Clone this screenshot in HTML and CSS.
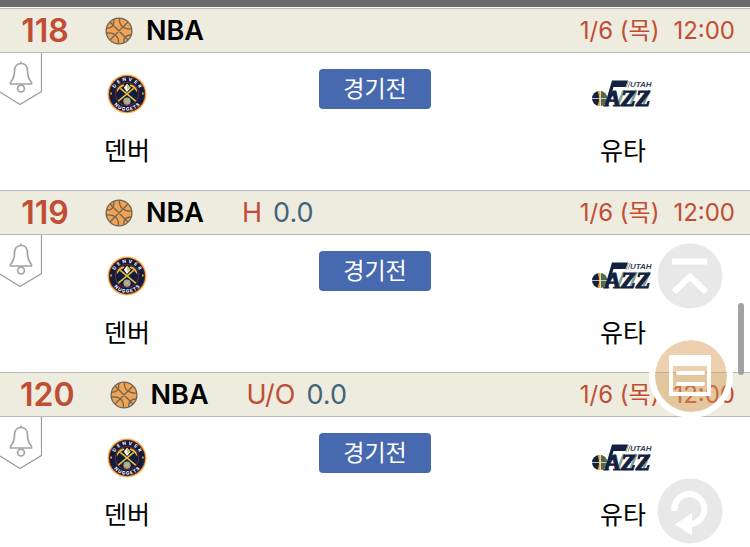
FILE: index.html
```html
<!DOCTYPE html>
<html lang="ko">
<head>
<meta charset="utf-8">
<meta name="viewport" content="width=device-width, initial-scale=1">
<title>NBA 경기 목록</title>
<link rel="stylesheet" href="styles.css">
</head>
<body>
<svg class="defs" aria-hidden="true">
  <symbol id="ball" viewBox="0 0 28 28">
    <circle cx="14" cy="14" r="12.9" fill="#f1a253" stroke="#6c6656" stroke-width="1.3"/>
    <path d="M5 5 23 23M23 5 5 23M14.500 1.500C14 8 18 12.500 26.500 12M1.500 16C9 15 14 19 13.500 26.500M19 26C18 21 21 18 26 18M2 11C6 11.500 9 9 9 3" fill="none" stroke="#6c6656" stroke-width="1.300"/>
  </symbol>
  <symbol id="bell" viewBox="0 0 42 52">
    <path d="M41.500 0V38.500L20 51.500 0 39" fill="#fff" stroke="#999" stroke-width="1.200"/>
    <path d="M21 8.500v2M21 10.500c-4 0-6.500 3-6.500 7.500 0 5-1 8-4 11.500v1.500h21v-1.500c-3-3.500-4-6.500-4-11.500 0-4.500-2.500-7.500-6-7.500Z" fill="none" stroke="#a3a3a3" stroke-width="1.700"/>
    <circle cx="21" cy="35.500" r="3.400" fill="none" stroke="#a3a3a3" stroke-width="1.700"/>
  </symbol>
  <symbol id="nuggets" viewBox="0 0 78 78">
    <circle cx="39" cy="39" r="38" fill="#f3b647"/>
    <circle cx="39" cy="39" r="35.500" fill="#8b2434"/>
    <circle cx="39" cy="39" r="34" fill="#101e3c"/>
    <circle cx="39" cy="39" r="22.500" fill="none" stroke="#7d2439" stroke-width="2"/>
    <path d="M22 53 52 28M56 53 26 28" stroke="#e8bf3c" stroke-width="3"/>
    <path d="M19 36c0-8 5-14 13-16l2 3c-6 2-10 6-15 13ZM59 36c0-8-5-14-13-16l-2 3c6 2 10 6 15 13Z" fill="#e8bf3c"/>
    <path d="m33 27 6-8 7 8-7 8Z" fill="#fff"/>
    <path d="m39 19 7 8-7 3Z" fill="#e8bf3c"/>
    <circle cx="39" cy="53" r="7" fill="#8aa0bd"/>
    <path d="M32 53h14M39 46v14M34 48c4 3 4 7 0 10M44 48c-4 3-4 7 0 10" fill="none" stroke="#e8bf3c" stroke-width="1.300"/>
    <path d="M8 36v4M70 36v4" stroke="#e8bf3c" stroke-width="3"/>
    <path id="arc-top" d="M14 32a26 26 0 0 1 50 0" fill="none"/>
    <path id="arc-bottom" d="M8 49a32.500 32.500 0 0 0 62 0" fill="none"/>
    <text class="crest-text"><textPath href="#arc-top" startOffset="50%">D&nbsp;&nbsp;E&nbsp;&nbsp;N&nbsp;&nbsp;V&nbsp;&nbsp;E&nbsp;&nbsp;R</textPath></text>
    <text class="crest-text"><textPath href="#arc-bottom" startOffset="50%">N U G G E T S</textPath></text>
  </symbol>
  <symbol id="jazz" viewBox="0 0 62 28">
    <circle cx="7.500" cy="18.500" r="7.500" fill="#12213f"/>
    <path d="M5.500 11.300c2 4 2 10.400 0 14.400a7.500 7.500 0 0 0 4 0V11.300a7.500 7.500 0 0 0-4 0Z" fill="#f3ad35"/>
    <path d="M9.500 11.300c-1.500 4-1.500 10.400 0 14.400 4-1 5.500-4 5.500-7.200s-1.500-6.200-5.500-7.200Z" fill="#536a4d"/>
    <path d="M0 18.500h15M8.500 11v15" stroke="#e6e6d6" stroke-width=".8"/>
    <path d="M20 .5h16L33.500 7H21.500L16 26H12.500Z" fill="#12213f"/>
    <path d="m38.500 1-2.500 6.500M36.500 1 34 7.500" stroke="#7c9183" stroke-width="1"/>
    <path d="m32 10-6 15M44.500 10l-6 15M57.500 10l-6 14" stroke="#8fa08f" stroke-width="2.500"/>
    <text x="38" y="7" class="utah-small">UTAH</text>
    <text x="13" y="26" class="utah-large">AZZ</text>
  </symbol>
</svg>

<header class="top-bar"></header>
<main>
  <article class="match">
    <header class="match-head">
      <span class="number">118</span>
      <svg class="ball" aria-hidden="true"><use href="#ball"/></svg>
      <strong class="league">NBA</strong>
      <time class="date">1/6 (목)</time><time class="time">12:00</time>
    </header>
    <div class="match-body">
      <button class="alarm" aria-label="알림"><svg><use href="#bell"/></svg></button>
      <div class="team"><svg class="logo" aria-hidden="true"><use href="#nuggets"/></svg><span>덴버</span></div>
      <button class="status">경기전</button>
      <div class="team"><svg class="logo" aria-hidden="true"><use href="#jazz"/></svg><span>유타</span></div>
    </div>
  </article>
  <article class="match">
    <header class="match-head">
      <span class="number">119</span>
      <svg class="ball" aria-hidden="true"><use href="#ball"/></svg>
      <strong class="league">NBA</strong>
      <span class="kind">H</span><span class="line">0.0</span>
      <time class="date">1/6 (목)</time><time class="time">12:00</time>
    </header>
    <div class="match-body">
      <button class="alarm" aria-label="알림"><svg><use href="#bell"/></svg></button>
      <div class="team"><svg class="logo" aria-hidden="true"><use href="#nuggets"/></svg><span>덴버</span></div>
      <button class="status">경기전</button>
      <div class="team"><svg class="logo" aria-hidden="true"><use href="#jazz"/></svg><span>유타</span></div>
    </div>
  </article>
  <article class="match">
    <header class="match-head">
      <span class="number">120</span>
      <svg class="ball" aria-hidden="true"><use href="#ball"/></svg>
      <strong class="league">NBA</strong>
      <span class="kind">U/O</span><span class="line">0.0</span>
      <time class="date">1/6 (목)</time><time class="time">12:00</time>
    </header>
    <div class="match-body">
      <button class="alarm" aria-label="알림"><svg><use href="#bell"/></svg></button>
      <div class="team"><svg class="logo" aria-hidden="true"><use href="#nuggets"/></svg><span>덴버</span></div>
      <button class="status">경기전</button>
      <div class="team"><svg class="logo" aria-hidden="true"><use href="#jazz"/></svg><span>유타</span></div>
    </div>
  </article>
</main>

<div class="scroll-thumb"></div>
<button class="fab to-top" aria-label="맨 위로">
  <svg viewBox="0 0 84 84"><circle cx="42" cy="42" r="32.500" fill="#e8e8e8"/><path d="M24 27.500h35M26 58l16-15.500L58 58" fill="none" stroke="#fff" stroke-width="6"/></svg>
</button>
<button class="fab slip" aria-label="목록">
  <svg viewBox="0 0 84 84"><circle cx="42" cy="42" r="36" fill="#d59750" fill-opacity=".45"/><circle cx="42" cy="42" r="39" fill="none" stroke="#fff" stroke-width="6"/><path d="M20 21h42v41H20Zm4 11v26h34V32Z" fill="#fff" fill-rule="evenodd"/><path d="M29 39h25M29 50h25" stroke="#fff" stroke-width="4" stroke-linecap="round"/></svg>
</button>
<button class="fab refresh" aria-label="새로고침">
  <svg viewBox="0 0 84 84"><circle cx="42" cy="42" r="32.500" fill="#e8e8e8"/><path d="M26.500 42A15 15 0 1 1 43 55" fill="none" stroke="#fff" stroke-width="6"/><path d="M27 55.500 44 44v22.500Z" fill="#fff"/></svg>
</button>
</body>
</html>
```
FILE: styles.css
```css
* { box-sizing: border-box; }

body {
  margin: 0;
  background: #fff;
  color: #000;
  font-family: Inter, "Noto Sans CJK KR", sans-serif;
  overflow: hidden;
}

button {
  padding: 0;
  border: 0;
  background: none;
  font: inherit;
  cursor: pointer;
}

.defs { position: absolute; width: 0; height: 0; }

.top-bar {
  height: 8px;
  background: #6b6b6b;
  border-bottom: 1px solid #fff;
}

.match-head {
  display: flex;
  align-items: center;
  height: 45px;
  padding: 0 15px 0 20px;
  border-top: 1px solid #bababa;
  border-bottom: 1px solid #bababa;
  background: #eeebdf;
  line-height: 40px;
  white-space: nowrap;
}

.number {
  min-width: 50px;
  color: #c04e34;
  font-size: 32px;
  font-weight: 600;
  text-align: center;
}

.ball {
  width: 28px;
  height: 28px;
  margin: 0 13px 0 35px;
}

.league {
  font-size: 27px;
  font-weight: 600;
}

.kind {
  margin-left: 38px;
  color: #c04e34;
  font-size: 27px;
  font-weight: 400;
}

.line {
  margin-left: 11px;
  color: #426479;
  font-size: 27px;
  font-weight: 400;
}

.date, .time {
  color: #c04e34;
  font-size: 24px;
  font-kerning: none;
}

.date { margin-left: auto; }
.time { margin-left: 14px; }

.match-body {
  position: relative;
  display: grid;
  grid-template-columns: 1fr 242px 1fr;
  justify-items: center;
  align-items: start;
  height: 137px;
}

.alarm {
  position: absolute;
  top: 0;
  left: 0;
}

.alarm svg { display: block; width: 42px; height: 52px; }

.team {
  display: flex;
  flex-direction: column;
  align-items: center;
  padding-top: 21px;
  font-size: 25px;
  line-height: 36px;
}

.logo {
  width: 62px;
  height: 40px;
  margin-bottom: 19px;
}

.crest-text {
  fill: #fff;
  font-family: Inter, sans-serif;
  font-size: 9px;
  font-weight: 700;
  text-anchor: middle;
}

.utah-small {
  fill: #34425b;
  font-family: "Liberation Sans", sans-serif;
  font-size: 8px;
  font-style: italic;
  font-weight: 700;
}

.utah-large {
  fill: #12213f;
  font-family: "Liberation Serif", serif;
  font-size: 24px;
  font-style: italic;
  font-weight: 700;
  stroke: #12213f;
  stroke-width: 1px;
}

.status {
  width: 112px;
  height: 40px;
  margin-top: 16px;
  border-radius: 4px;
  background: #4769b0;
  color: #fff;
  font-size: 23px;
  line-height: 38px;
}

.scroll-thumb {
  position: fixed;
  top: 303px;
  right: 6px;
  width: 6px;
  height: 72px;
  border-radius: 3px;
  background: #a2a2a2;
}

.fab {
  position: fixed;
  right: 18px;
  width: 84px;
  height: 84px;
  border-radius: 50%;
}

.fab svg { display: block; width: 84px; height: 84px; }

.to-top { bottom: 229px; }
.slip { right: 17px; bottom: 129px; }
.refresh { bottom: -6px; }
```
